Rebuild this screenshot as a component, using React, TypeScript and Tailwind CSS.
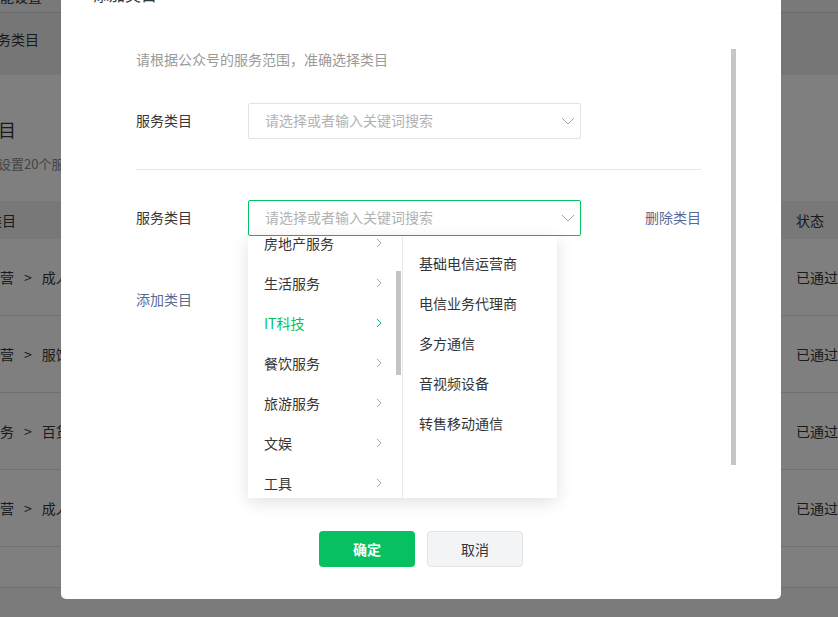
import React from 'react';

const leftItems = ['房地产服务', '生活服务', 'IT科技', '餐饮服务', '旅游服务', '文娱', '工具'];
const rightItems = ['基础电信运营商', '电信业务代理商', '多方通信', '音视频设备', '转售移动通信'];

const rows = [
  ['个体经营', '成人用品'],
  ['个体经营', '服饰'],
  ['生活服务', '百货'],
  ['个体经营', '成人用品'],
];

const ChevronDown = () => (
  <svg width="14" height="8" viewBox="0 0 14 8" fill="none">
    <polyline points="1,1 7,7 13,1" stroke="#a3a3a3" strokeWidth="1" />
  </svg>
);

const ChevronRight = ({ active }: { active?: boolean }) => (
  <svg width="6" height="10" viewBox="0 0 6 10" fill="none">
    <polyline points="1,1 5,5 1,9" stroke={active ? '#07c160' : '#aaaaaa'} strokeWidth="1" />
  </svg>
);

const Select = ({ focused }: { focused?: boolean }) => (
  <div
    className={
      focused
        ? 'flex items-center justify-between w-[333px] h-[36px] pl-4 pr-[5px] border border-[#07c160] rounded-[2px] bg-white'
        : 'flex items-center justify-between w-[333px] h-[36px] pl-4 pr-[5px] border border-[#e2e2e2] rounded-[2px] bg-white'
    }
  >
    <span className="text-[14px] leading-[20px] -mt-[2px] text-[#b2b2b2]">请选择或者输入关键词搜索</span>
    <ChevronDown />
  </div>
);

const Background = () => (
  <div className="flex flex-col bg-white text-[#353535]">
    <div className="h-[13px] bg-[#f2f2f2] border-b border-[#d6d6d6] overflow-hidden">
      <div className="-mt-[14px] -ml-[14px] text-[14px] leading-[20px]">功能设置</div>
    </div>
    <div className="h-[62px] bg-[#ececec] pt-[16px]">
      <div className="-ml-[17px] text-[14px] leading-[20px]">服务类目</div>
    </div>
    <div className="mt-[41px] -ml-[56px] text-[18px] leading-[26px]">服务类目</div>
    <div className="mt-[12px] -ml-[41px] text-[13px] leading-[20px] text-[#8a8a8a]">
      最多可设置20个服务类目，每月可修改5次
    </div>
    <div className="mt-[27px] h-[38px] flex items-center bg-[#f0f0f0]">
      <div className="flex-1 -ml-[12px] text-[14px]">类目</div>
      <div className="w-[42px] text-[14px]">状态</div>
    </div>
    {rows.map(([a, b], i) => (
      <div key={i} className="h-[77px] flex items-center border-b border-[#e0e0e0]">
        <div className="flex-1 -ml-[42px] text-[14px] whitespace-nowrap">
          {a}
          <span className="mx-[10px]">&gt;</span>
          {b}
        </div>
        <div className="w-[42px] text-[14px] whitespace-nowrap">已通过</div>
      </div>
    ))}
    <div className="h-[41px] border-b border-[#e0e0e0]" />
    <div className="h-[40px] bg-[#f6f6f6]" />
  </div>
);

export default function App() {
  return (
    <div className="relative w-[838px] h-[617px] overflow-hidden font-['Noto_Sans_CJK_SC',sans-serif]">
      <Background />
      <div className="absolute inset-0 bg-black/50" />

      <div className="absolute left-[61px] top-[-64px] w-[720px] bg-white rounded-[5px] flex flex-col">
        <div className="h-[113px] px-8 pt-[47px] text-[16px] leading-[22px] text-[#353535]">添加类目</div>

        <div className="relative h-[450px] pl-[75px] pr-[80px]">
          <div className="text-[14px] leading-[20px] text-[#9a9a9a]">请根据公众号的服务范围，准确选择类目</div>

          <div className="mt-[34px] flex items-center">
            <div className="w-[112px] text-[14px] leading-[20px] -mt-[2px] text-[#353535]">服务类目</div>
            <Select />
          </div>

          <div className="mt-[30px] h-px bg-[#e7e7e7]" />

          <div className="mt-[30px] flex items-center">
            <div className="w-[112px] text-[14px] leading-[20px] -mt-[2px] text-[#353535]">服务类目</div>
            <div className="relative">
              <Select focused />
              <div className="absolute left-0 top-full z-10 flex w-[309px] h-[262px] bg-white shadow-[0_4px_16px_rgba(0,0,0,0.12)]">
                <div className="relative w-[155px] border-r border-[#e8e8e8] overflow-hidden">
                  <div className="-mt-[13px]">
                    {leftItems.map((item) => {
                      const active = item === 'IT科技';
                      return (
                        <div
                          key={item}
                          className={
                            active
                              ? 'h-[40px] flex items-center justify-between pl-4 pr-[20px] text-[14px] text-[#07c160]'
                              : 'h-[40px] flex items-center justify-between pl-4 pr-[20px] text-[14px] text-[#353535]'
                          }
                        >
                          <span>{item}</span>
                          <ChevronRight active={active} />
                        </div>
                      );
                    })}
                  </div>
                  <div className="absolute right-[1px] top-[35px] w-[5px] h-[104px] bg-[#c4c4c4]" />
                </div>
                <div className="flex-1 pt-[7px]">
                  {rightItems.map((item) => (
                    <div key={item} className="h-[40px] flex items-center pl-4 text-[14px] text-[#353535]">
                      {item}
                    </div>
                  ))}
                </div>
              </div>
            </div>
            <a className="ml-auto -mt-[2px] text-[14px] text-[#576b95] cursor-pointer">删除类目</a>
          </div>

          <div className="mt-[52px] text-[14px] leading-[22px] text-[#576b95]">添加类目</div>

          <div className="absolute right-[45px] top-0 w-[5px] h-[416px] bg-[#c6c6c6]" />
        </div>

        <div className="flex justify-center gap-3 pt-[32px] pb-[32px]">
          <button className="w-[96px] h-[36px] rounded-[4px] bg-[#07c160] text-white text-[14px] font-bold">
            确定
          </button>
          <button className="w-[96px] h-[36px] rounded-[4px] bg-[#f3f4f6] border border-[#e1e2e4] text-[#353535] text-[14px]">
            取消
          </button>
        </div>
      </div>
    </div>
  );
}
